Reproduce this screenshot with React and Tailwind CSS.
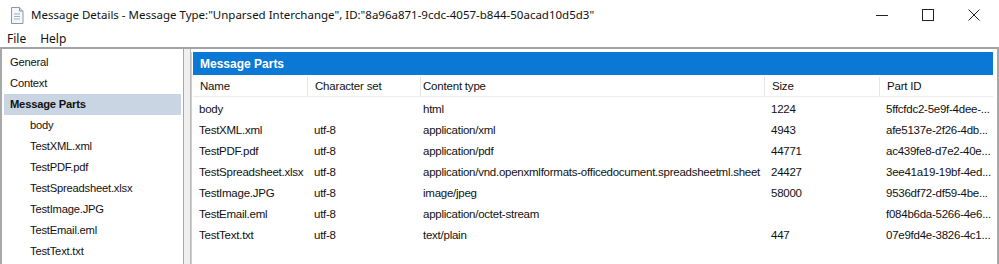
import React from 'react';

const navItems = [
  { label: 'General', level: 0 },
  { label: 'Context', level: 0 },
  { label: 'Message Parts', level: 0, selected: true },
  { label: 'body', level: 1 },
  { label: 'TestXML.xml', level: 1 },
  { label: 'TestPDF.pdf', level: 1 },
  { label: 'TestSpreadsheet.xlsx', level: 1 },
  { label: 'TestImage.JPG', level: 1 },
  { label: 'TestEmail.eml', level: 1 },
  { label: 'TestText.txt', level: 1 },
];

const parts = [
  ['body', '', 'html', '1224', '5ffcfdc2-5e9f-4dee-...'],
  ['TestXML.xml', 'utf-8', 'application/xml', '4943', 'afe5137e-2f26-4db...'],
  ['TestPDF.pdf', 'utf-8', 'application/pdf', '44771', 'ac439fe8-d7e2-40e...'],
  ['TestSpreadsheet.xlsx', 'utf-8', 'application/vnd.openxmlformats-officedocument.spreadsheetml.sheet', '24427', '3ee41a19-19bf-4ed...'],
  ['TestImage.JPG', 'utf-8', 'image/jpeg', '58000', '9536df72-df59-4be...'],
  ['TestEmail.eml', 'utf-8', 'application/octet-stream', '', 'f084b6da-5266-4e6...'],
  ['TestText.txt', 'utf-8', 'text/plain', '447', '07e9fd4e-3826-4c1...'],
];

const headers = ['Name', 'Character set', 'Content type', 'Size', 'Part ID'];

const DocIcon = () => (
  <svg width="14" height="17" viewBox="0 0 14 17">
    <path d="M1.5 0.5h8l3.5 3.5v12.5h-11.5z" fill="#f4f6f8" stroke="#8a97a6" />
    <path d="M9.5 0.5v3.5h3.5" fill="#dde3ea" stroke="#8a97a6" />
    <path d="M4 7h6M4 9.5h6M4 12h6" stroke="#9fb2c6" />
  </svg>
);

export default function App() {
  return (
    <div className="w-[999px] h-[264px] overflow-hidden bg-white text-[#111] font-['Liberation_Sans',Arial,sans-serif]">
      {/* Title bar */}
      <div className="h-[29px] pt-[1px] flex items-center font-['Noto_Sans',sans-serif]">
        <div className="pl-[10px] pr-[7px] flex items-center">
          <DocIcon />
        </div>
        <div className="text-[11.5px] text-[#111]">
          Message Details - Message Type:"Unparsed Interchange", ID:"8a96a871-9cdc-4057-b844-50acad10d5d3"
        </div>
        <div className="ml-auto flex items-center h-full">
          <div className="w-[46px] h-full flex items-center justify-center">
            <svg width="12" height="12" viewBox="0 0 12 12"><path d="M0 6.5h12" stroke="#222" /></svg>
          </div>
          <div className="w-[46px] h-full flex items-center justify-center">
            <svg width="12" height="12" viewBox="0 0 12 12"><rect x="0.5" y="0.5" width="11" height="11" fill="none" stroke="#222" /></svg>
          </div>
          <div className="w-[46px] h-full flex items-center justify-center mr-[2px]">
            <svg width="12" height="12" viewBox="0 0 12 12"><path d="M0.5 0.5l11 11M11.5 0.5l-11 11" stroke="#222" /></svg>
          </div>
        </div>
      </div>

      {/* Menu bar */}
      <div className="h-[18px] pt-[1px] flex items-center gap-[14px] px-[7px] text-[12px] font-['Noto_Sans',sans-serif]">
        <span>File</span>
        <span>Help</span>
      </div>

      {/* Body */}
      <div className="flex h-[217px] border-t-2 border-[#a3a3a3]">
        {/* Left tree */}
        <div className="w-[184px] shrink-0 border-l-2 border-r border-[#a8a8a8] pt-[3px] px-[2px] text-[11.2px] tracking-[-0.2px]">
          {navItems.map((item) => (
            <div
              key={item.label}
              className={`h-[21px] flex items-center ${item.level ? 'pl-[26px]' : 'pl-[6px]'} ${
                item.selected ? 'bg-[#c9d5e2] font-bold' : ''
              }`}
            >
              {item.label}
            </div>
          ))}
        </div>

        {/* Splitter */}
        <div className="w-[7px] shrink-0 bg-[#f0f0f0] border-r border-[#b8b8b8]" />

        {/* Right panel */}
        <div className="flex-1 pt-[3px] pr-[2px] border-r-2 border-[#a8a8a8]">
          <div className="h-full border-l border-[#d0d0d0] pl-[1px] pr-[2px]">
            <div className="h-[23px] bg-[#0a78d4] flex items-center px-[7px] text-white font-bold text-[12px]">
              Message Parts
            </div>
            <div className="grid grid-cols-[115px_113px_344px_115px_1fr] h-[22px] pt-[2px] border-b border-[#ececec] text-[11.5px] tracking-[-0.2px]">
              {headers.map((h, i) => (
                <div
                  key={h}
                  className={`flex items-center ${i === 2 ? 'pl-[2px]' : 'pl-[7px]'} ${
                    i < 4 ? 'border-r border-[#e6e6e6]' : ''
                  }`}
                >
                  {h}
                </div>
              ))}
            </div>
            <div className="pt-[2px] text-[11.5px] tracking-[-0.25px]">
              {parts.map((row) => (
                <div key={row[0]} className="grid grid-cols-[115px_113px_344px_115px_1fr] h-[21px]">
                  {row.map((cell, i) => (
                    <div
                      key={i}
                      className={`flex items-center whitespace-nowrap ${
                        i === 2 ? 'pl-[2px]' : 'pl-[6px]'
                      }`}
                    >
                      {cell}
                    </div>
                  ))}
                </div>
              ))}
            </div>
          </div>
        </div>
      </div>
    </div>
  );
}
